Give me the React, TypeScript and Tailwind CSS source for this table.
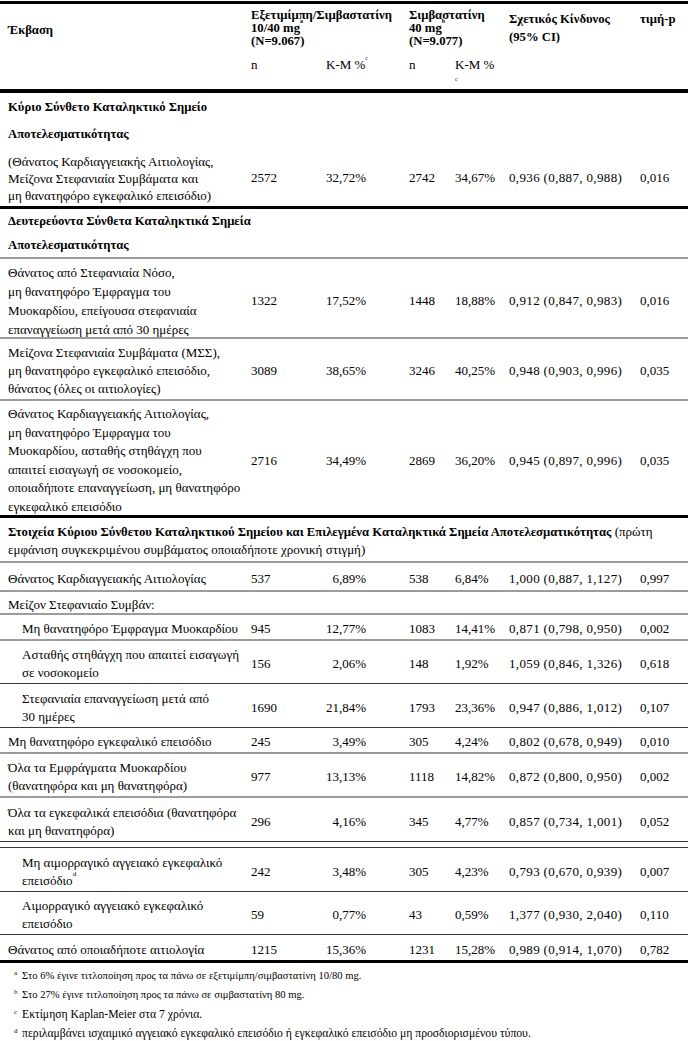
// Clinical outcomes table — IMPROVE-IT style summary

type Line = "gray" | "thin" | "thick" | "none";

type DataRow = {
  lines: React.ReactNode[];
  indent?: boolean;
  values?: [string, string, string, string, string, string];
  h: number;
  line: Line;
  leading?: string;
};

const cols = "grid grid-cols-[243px_74px_84px_46px_54px_130px_57px]";

const lineClass: Record<Line, string> = {
  gray: "border-b-2 border-[#9c9c9c]",
  thin: "border-b border-[#3a3a3a]",
  thick: "border-b-[3px] border-black",
  none: "",
};

const secondary: DataRow[] = [
  {
    lines: [
      "Θάνατος από Στεφανιαία Νόσο,",
      "μη θανατηφόρο Έμφραγμα του",
      "Μυοκαρδίου, επείγουσα στεφανιαία",
      "επαναγγείωση μετά από 30 ημέρες",
    ],
    values: ["1322", "17,52%", "1448", "18,88%", "0,912 (0,847, 0,983)", "0,016"],
    h: 80,
    line: "gray",
    leading: "leading-[19px]",
  },
  {
    lines: [
      "Μείζονα Στεφανιαία Συμβάματα (ΜΣΣ),",
      "μη θανατηφόρο εγκεφαλικό επεισόδιο,",
      "θάνατος (όλες οι αιτιολογίες)",
    ],
    values: ["3089", "38,65%", "3246", "40,25%", "0,948 (0,903, 0,996)", "0,035"],
    h: 62,
    line: "gray",
  },
  {
    lines: [
      "Θάνατος Καρδιαγγειακής Αιτιολογίας,",
      "μη θανατηφόρο Έμφραγμα του",
      "Μυοκαρδίου, ασταθής στηθάγχη που",
      "απαιτεί εισαγωγή σε νοσοκομείο,",
      "οποιαδήποτε επαναγγείωση, μη θανατηφόρο",
      "εγκεφαλικό επεισόδιο",
    ],
    values: ["2716", "34,49%", "2869", "36,20%", "0,945 (0,897, 0,996)", "0,035"],
    h: 117,
    line: "thick",
    leading: "leading-[18.5px]",
  },
];

const components: DataRow[] = [
  {
    lines: ["Θάνατος Καρδιαγγειακής Αιτιολογίας"],
    values: ["537", "6,89%", "538", "6,84%", "1,000 (0,887, 1,127)", "0,997"],
    h: 29,
    line: "gray",
  },
  { lines: ["Μείζον Στεφανιαίο Συμβάν:"], h: 23, line: "gray" },
  {
    lines: ["Μη θανατηφόρο Έμφραγμα Μυοκαρδίου"],
    indent: true,
    values: ["945", "12,77%", "1083", "14,41%", "0,871 (0,798, 0,950)", "0,002"],
    h: 26,
    line: "gray",
  },
  {
    lines: ["Ασταθής στηθάγχη που απαιτεί εισαγωγή", "σε νοσοκομείο"],
    indent: true,
    values: ["156", "2,06%", "148", "1,92%", "1,059 (0,846, 1,326)", "0,618"],
    h: 43,
    line: "thin",
  },
  {
    lines: ["Στεφανιαία επαναγγείωση μετά από", "30 ημέρες"],
    indent: true,
    values: ["1690", "21,84%", "1793", "23,36%", "0,947 (0,886, 1,012)", "0,107"],
    h: 44,
    line: "thin",
  },
  {
    lines: ["Μη θανατηφόρο εγκεφαλικό επεισόδιο"],
    values: ["245", "3,49%", "305", "4,24%", "0,802 (0,678, 0,949)", "0,010"],
    h: 26,
    line: "gray",
  },
  {
    lines: ["Όλα τα Εμφράγματα Μυοκαρδίου", "(θανατηφόρα και μη θανατηφόρα)"],
    values: ["977", "13,13%", "1118", "14,82%", "0,872 (0,800, 0,950)", "0,002"],
    h: 44,
    line: "gray",
  },
  {
    lines: ["Όλα τα εγκεφαλικά επεισόδια (θανατηφόρα", "και μη θανατηφόρα)"],
    values: ["296", "4,16%", "345", "4,77%", "0,857 (0,734, 1,001)", "0,052"],
    h: 44,
    line: "thin",
  },
  { lines: [], h: 6, line: "thin" },
  {
    lines: [
      "Μη αιμορραγικό αγγειακό εγκεφαλικό",
      <>
        επεισόδιο<sup className="text-[7px] align-[5px]">d</sup>
      </>,
    ],
    indent: true,
    values: ["242", "3,48%", "305", "4,23%", "0,793 (0,670, 0,939)", "0,007"],
    h: 44,
    line: "thin",
  },
  {
    lines: ["Αιμορραγικό αγγειακό εγκεφαλικό", "επεισόδιο"],
    indent: true,
    values: ["59", "0,77%", "43", "0,59%", "1,377 (0,930, 2,040)", "0,110"],
    h: 43,
    line: "thin",
  },
  {
    lines: ["Θάνατος από οποιαδήποτε αιτιολογία"],
    values: ["1215", "15,36%", "1231", "15,28%", "0,989 (0,914, 1,070)", "0,782"],
    h: 28,
    line: "thick",
  },
];

// the first two notes are set tighter in the source than the last two
const footnotes = [
  { k: "a", t: "Στο 6% έγινε τιτλοποίηση προς τα πάνω σε εξετιμίμπη/σιμβαστατίνη 10/80 mg.", size: "text-[10.6px]" },
  { k: "b", t: "Στο 27% έγινε τιτλοποίηση προς τα πάνω σε σιμβαστατίνη 80 mg.", size: "text-[10.6px]" },
  { k: "c", t: "Εκτίμηση Kaplan-Meier στα 7 χρόνια.", size: "text-[11.7px]" },
  {
    k: "d",
    t: "περιλαμβάνει ισχαιμικό αγγειακό εγκεφαλικό επεισόδιο ή εγκεφαλικό επεισόδιο μη προσδιορισμένου τύπου.",
    size: "text-[11.7px]",
  },
];

function Row({ row }: { row: DataRow }) {
  const v = row.values;
  return (
    <div
      className={`${cols} ${lineClass[row.line]} ${row.lines.length ? "pt-[4px]" : ""}`}
      style={{ height: row.h }}
    >
      <div
        className={`flex flex-col justify-center whitespace-nowrap ${row.leading ?? "leading-[18px]"} ${
          row.indent ? "pl-[22px]" : "pl-[8px]"
        }`}
      >
        {row.lines.map((l, i) => (
          <span key={i}>{l}</span>
        ))}
      </div>
      {v && (
        <>
          <div className="flex items-center pl-[8px]">{v[0]}</div>
          <div className="flex items-center pl-[9px]">
            <span className="inline-block w-[40px] text-right">{v[1]}</span>
          </div>
          <div className="flex items-center pl-[8px]">{v[2]}</div>
          <div className="flex items-center pl-[8px]">{v[3]}</div>
          <div className="flex items-center pl-[8px] whitespace-nowrap tracking-[0.35px]">{v[4]}</div>
          <div className="flex items-center pl-[9px]">{v[5]}</div>
        </>
      )}
    </div>
  );
}

function SectionTitle({ text, h, line = "none" }: { text: string; h: number; line?: Line }) {
  return (
    <div
      className={`flex items-center pl-[8px] font-bold text-[12.7px] whitespace-nowrap ${lineClass[line]}`}
      style={{ height: h }}
    >
      {text}
    </div>
  );
}

export default function App() {
  return (
    <div className="w-[688px] bg-white text-black text-[13px] font-[Liberation_Serif] [font-family:Liberation_Serif] pt-[1px]">
      <div className="border-t-[3px] border-black">
        {/* Header */}
        <div className={`${cols} h-[89px] border-b-4 border-black font-bold text-[12.7px]`}>
          <div className="pl-[8px] pt-[17px] leading-[18px]">Έκβαση</div>
          <div className="col-span-2 pt-[5px]">
            <div className="pl-[8px] leading-[13px] whitespace-nowrap">
              Εξετιμίμπη/Σιμβαστατίνη
              <br />
              10/40 mg<sup className="text-[6px] align-[6px]">a</sup>
              <br />
              (N=9.067)
            </div>
            <div className="grid grid-cols-[74px_84px] mt-[8px] font-normal text-[13px] leading-[18px]">
              <div className="pl-[8px]">n</div>
              <div className="pl-[9px]">
                K-M %<sup className="text-[6px] align-[6px]">c</sup>
              </div>
            </div>
          </div>
          <div className="col-span-2 pt-[5px]">
            <div className="pl-[8px] leading-[13px] whitespace-nowrap">
              Σιμβαστατίνη
              <br />
              40 mg<sup className="text-[6px] align-[6px]">b</sup>
              <br />
              (N=9.077)
            </div>
            <div className="grid grid-cols-[46px_54px] mt-[8px] font-normal text-[13px] leading-[18px]">
              <div className="pl-[8px]">n</div>
              <div className="pl-[8px] leading-[14px] pt-[2px]">
                K-M %
                <br />
                <span className="text-[6px] align-top">c</span>
              </div>
            </div>
          </div>
          <div className="pl-[8px] pt-[6px] leading-[18px] whitespace-nowrap">
            Σχετικός Κίνδυνος
            <br />
            (95% CI)
          </div>
          <div className="pl-[9px] pt-[6px] leading-[18px]">τιμή-p</div>
        </div>

        {/* Primary composite endpoint */}
        <SectionTitle text="Κύριο Σύνθετο Καταληκτικό Σημείο" h={30} />
        <SectionTitle text="Αποτελεσματικότητας" h={23} />
        <Row
          row={{
            lines: [
              "(Θάνατος Καρδιαγγειακής Αιτιολογίας,",
              "Μείζονα Στεφανιαία Συμβάματα και",
              "μη θανατηφόρο εγκεφαλικό επεισόδιο)",
            ],
            values: ["2572", "32,72%", "2742", "34,67%", "0,936 (0,887, 0,988)", "0,016"],
            h: 63,
            line: "thick",
            leading: "leading-[17px]",
          }}
        />

        {/* Secondary composite endpoints */}
        <SectionTitle text="Δευτερεύοντα Σύνθετα Καταληκτικά Σημεία" h={26} />
        <SectionTitle text="Αποτελεσματικότητας" h={24} line="gray" />
        {secondary.map((r, i) => (
          <Row key={i} row={r} />
        ))}

        {/* Components */}
        <div className="h-[45px] pt-[3px] flex flex-col justify-center pl-[8px] leading-[18px] border-b-2 border-[#9c9c9c] whitespace-nowrap">
          <span>
            <b className="text-[12.7px]">
              Στοιχεία Κύριου Σύνθετου Καταληκτικού Σημείου και Επιλεγμένα Καταληκτικά Σημεία
              Αποτελεσματικότητας
            </b>{" "}
            (πρώτη
          </span>
          <span>εμφάνιση συγκεκριμένου συμβάματος οποιαδήποτε χρονική στιγμή)</span>
        </div>
        {components.map((r, i) => (
          <Row key={i} row={r} />
        ))}

        {/* Footnotes */}
        <ul className="pt-[3px]">
          {footnotes.map((f) => (
            <li key={f.k} className="flex h-[19.3px] items-center">
              <span className="w-[22px] pl-[14px] text-[7px] leading-[14px] self-start">{f.k}</span>
              <span className={`${f.size} leading-[19px]`}>{f.t}</span>
            </li>
          ))}
        </ul>
      </div>
    </div>
  );
}
